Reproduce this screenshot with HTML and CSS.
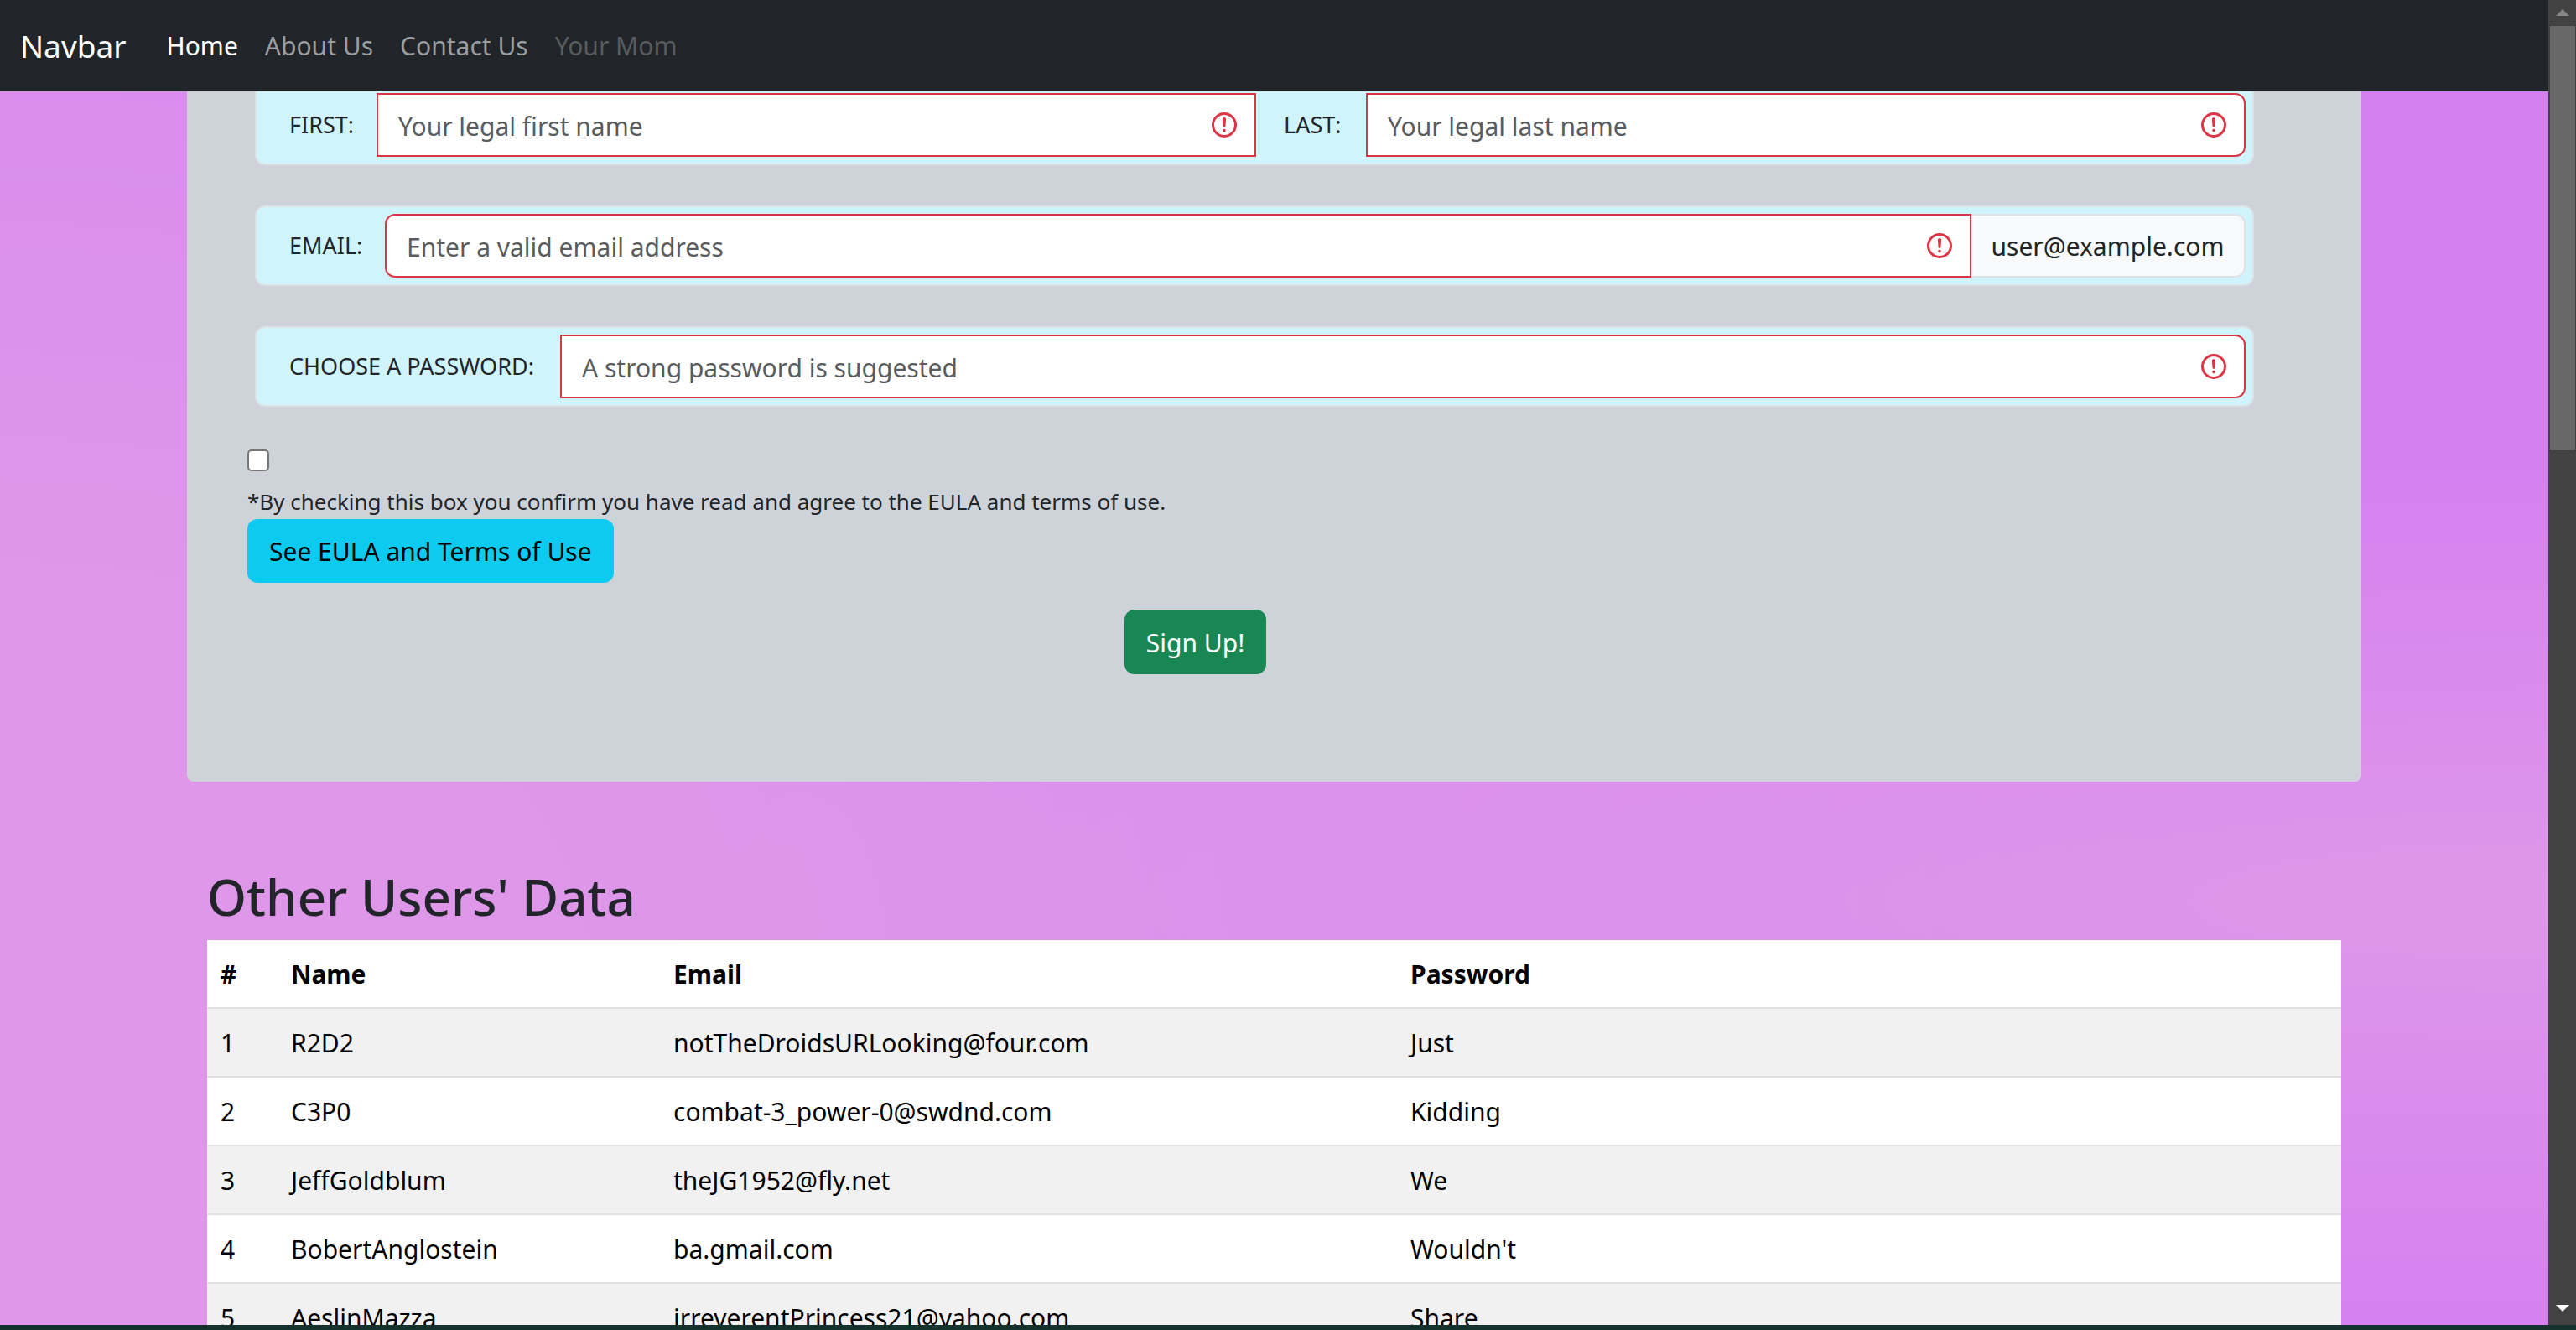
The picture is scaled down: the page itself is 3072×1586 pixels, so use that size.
FILE: index.html
```html
<!DOCTYPE html>
<html lang="en">
<head>
<meta charset="utf-8">
<title>Sign Up</title>
<link rel="stylesheet" href="styles.css">
</head>
<body>
<svg class="defs" aria-hidden="true">
  <symbol id="invalid" viewBox="0 0 12 12">
    <g fill="none" stroke="#dc3545"><circle cx="6" cy="6" r="4.5"/><path stroke-linejoin="round" d="M5.8 3.6h.4L6 6.5z"/><circle cx="6" cy="8.2" r=".6" fill="#dc3545" stroke="none"/></g>
  </symbol>
</svg>
<div class="window">
  <div class="view">
    <nav class="navbar">
      <a class="brand" href="#">Navbar</a>
      <a class="nav-link active" href="#">Home</a>
      <a class="nav-link" href="#">About Us</a>
      <a class="nav-link" href="#">Contact Us</a>
      <a class="nav-link disabled" href="#">Your Mom</a>
    </nav>
    <main>
      <form class="card">
        <div class="group">
          <label class="w-first" for="first">FIRST:</label>
          <div class="field"><input id="first" type="text" placeholder="Your legal first name"><svg class="mark"><use href="#invalid"/></svg></div>
          <label class="inner w-last" for="last">LAST:</label>
          <div class="field round-end"><input id="last" type="text" placeholder="Your legal last name"><svg class="mark"><use href="#invalid"/></svg></div>
        </div>
        <div class="group">
          <label class="w-email" for="email">EMAIL:</label>
          <div class="field round-start"><input id="email" type="email" placeholder="Enter a valid email address"><svg class="mark"><use href="#invalid"/></svg></div>
          <span class="addon">user@example.com</span>
        </div>
        <div class="group">
          <label class="w-password" for="password">CHOOSE A PASSWORD:</label>
          <div class="field round-end"><input id="password" type="password" placeholder="A strong password is suggested"><svg class="mark"><use href="#invalid"/></svg></div>
        </div>
        <div class="agree">
          <input class="check" id="agree" type="checkbox">
          <label class="terms" for="agree">*By checking this box you confirm you have read and agree to the EULA and terms of use.</label>
          <button class="btn info" type="button">See EULA and Terms of Use</button>
          <button class="btn success" type="submit">Sign Up!</button>
        </div>
      </form>
      <section class="users">
        <h2>Other Users' Data</h2>
        <table>
          <colgroup><col class="c-num"><col class="c-name"><col class="c-email"><col></colgroup>
          <thead><tr><th>#</th><th>Name</th><th>Email</th><th>Password</th></tr></thead>
          <tbody>
            <tr><td>1</td><td>R2D2</td><td>notTheDroidsURLooking@four.com</td><td>Just</td></tr>
            <tr><td>2</td><td>C3P0</td><td>combat-3_power-0@swdnd.com</td><td>Kidding</td></tr>
            <tr><td>3</td><td>JeffGoldblum</td><td>theJG1952@fly.net</td><td>We</td></tr>
            <tr><td>4</td><td>BobertAnglostein</td><td>ba.gmail.com</td><td>Wouldn't</td></tr>
            <tr><td>5</td><td>AeslinMazza</td><td>irreverentPrincess21@yahoo.com</td><td>Share</td></tr>
          </tbody>
        </table>
      </section>
    </main>
  </div>
  <div class="scrollbar" aria-hidden="true">
    <svg class="arrow" viewBox="0 0 33 31"><path d="M17 11l8 8H9z" fill="#868686"/></svg>
    <div class="thumb"></div>
    <svg class="arrow end" viewBox="0 0 33 31"><path d="M9 7h16l-8 8z" fill="#fff"/></svg>
  </div>
</div>
</body>
</html>
```
FILE: styles.css
```css
* { box-sizing: border-box; }

body {
  margin: 0;
  font-family: "Noto Sans", "Open Sans", sans-serif;
  font-size: 30px;
  line-height: 48px;
  color: #212529;
}

.defs { display: none; }

.window {
  display: flex;
  height: 100vh;
  overflow: hidden;
  border-bottom: 6px solid #16322d;
}

.view {
  position: relative;
  flex: 1;
  overflow: hidden;
  background:
    radial-gradient(ellipse 105% 33% at 100% 68%, #de97e8 0%, #de97e800 100%),
    radial-gradient(ellipse 85% 120% at 0% 75%, #de97e9 25%, #de97e900 100%),
    #d580f1;
}

.navbar {
  position: absolute;
  inset: 0 0 auto;
  z-index: 1;
  display: flex;
  align-items: center;
  height: 109px;
  padding: 0 24px;
  background: #212529;
}

.navbar a { text-decoration: none; }
.brand { margin-right: 32px; font-size: 37px; color: #fff; }
.nav-link { padding: 0 16px; color: #9b9d9f; }
.nav-link.active { color: #fff; }
.nav-link.disabled { color: #595c5f; }

.card {
  display: flex;
  flex-direction: column;
  gap: 48px;
  margin: 0 223px;
  padding: 101px 128px 128px 72px;
  background: #ced3da;
  border-radius: 0 0 8px 8px;
}

.group {
  display: flex;
  margin-left: 9px;
  padding: 8px;
  background: #cff4fc;
  border: 2px solid #dee2e6;
  border-radius: 12px;
}

.group label {
  padding-left: 31px;
  font-size: 27px;
  line-height: 76px;
  white-space: nowrap;
}
.group .inner { padding-left: 33px; }
.w-first { width: 135px; }
.w-last { width: 131px; }
.w-email { width: 145px; }
.w-password { width: 354px; }

.field { position: relative; flex: 1; }
.field input {
  display: block;
  width: 100%;
  height: 76px;
  padding: 2px 72px 0 24px;
  font: inherit;
  color: #212529;
  background: #fff;
  border: 2px solid #dc3545;
  border-radius: 0;
}
.field input::placeholder { color: #595c5f; opacity: 1; }
.round-start input { border-radius: 12px 0 0 12px; }
.round-end input { border-radius: 0 12px 12px 0; }
.mark { position: absolute; right: 20px; top: 20px; width: 36px; height: 36px; }

.addon {
  width: 327px;
  height: 76px;
  line-height: 74px;
  text-align: center;
  background: #f8f9fa;
  border: 2px solid #dee2e6;
  border-left: 0;
  border-radius: 0 12px 12px 0;
}

.agree {
  display: flex;
  flex-direction: column;
  align-items: flex-start;
  margin-right: 132px;
}
.check {
  appearance: none;
  width: 26px;
  height: 26px;
  margin: 3px 0 16px;
  background: #fff;
  border: 2px solid #767676;
  border-radius: 5px;
}
.terms { font-size: 26px; line-height: 41px; }

.btn {
  height: 76px;
  padding: 2px 26px 0;
  font: inherit;
  border: 0;
  border-radius: 12px;
}
.info { background: #0dcaf0; color: #000; }
.success { align-self: center; height: 77px; margin-top: 32px; background: #198754; color: #fff; }

.users { margin: 0 247px; padding-top: 99px; }
h2 { margin: 0 0 13px; font-size: 60px; font-weight: 500; line-height: 77px; }

table { width: 100%; table-layout: fixed; border-collapse: separate; border-spacing: 0; color: #000; }
.c-num { width: 84px; }
.c-name { width: 456px; }
.c-email { width: 879px; }
th, td {
  height: 82px;
  padding: 17px 16px 15px;
  text-align: left;
  background: #fff;
  border-bottom: 2px solid #dee2e6;
}
tbody tr:nth-child(odd) td { background: #f1f1f1; }

.scrollbar { display: flex; flex-direction: column; width: 33px; background: #424242; }
.arrow { width: 33px; height: 31px; }
.thumb { height: 32%; margin: 0 1px 0 2px; background: #686868; }
.end { margin-top: auto; }
```
